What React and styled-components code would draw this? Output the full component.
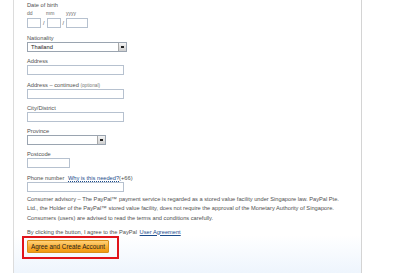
import React from 'react';
import styled, { createGlobalStyle } from 'styled-components';

const GlobalStyle = createGlobalStyle`
  html, body { margin: 0; padding: 0; background: #fff; }
  body { font-family: "Liberation Sans", Arial, sans-serif; }
`;

const Page = styled.div`
  width: 400px;
  height: 273px;
  overflow: hidden;
  background: #fff;
`;

const Panel = styled.div`
  margin-left: 13px;
  width: 349px;
  height: 273px;
  border-left: 1px solid #dcdcdc;
  border-right: 1px solid #d4d4d4;
  background: linear-gradient(to bottom, #fff 0, #fff 235px, #eef5fd 273px);
  box-sizing: border-box;
  padding: 1px 0 0 13px;
  color: #505050;
  font-size: 5.7px;
`;

const Group = styled.div`
  display: flex;
  flex-direction: column;
  align-items: flex-start;
  margin-bottom: ${p => p.gap ?? 5.3}px;
`;

const Label = styled.div`
  line-height: 8px;
  height: 8px;
  white-space: nowrap;
`;

const Small = styled.span`
  font-size: 4.7px;
  color: #777;
`;

const HelpLink = styled.a`
  color: #1a4b8c;
  text-decoration: none;
  border-bottom: 1px dotted #1a4b8c;
  margin-left: 2px;
`;

const DateRow = styled.div`
  display: flex;
  align-items: center;
  gap: 2px;
`;

const SubLabels = styled.div`
  display: flex;
  line-height: 8px;
  height: 9px;
  color: #666;
  font-size: 5px;
`;

const Sub = styled.span`
  width: ${p => p.w}px;
`;

const Input = styled.div`
  width: ${p => p.w}px;
  height: 10px;
  box-sizing: border-box;
  border: 1px solid #b6c1cf;
  background: #fff;
`;

const Slash = styled.span`
  font-size: 5.5px;
`;

const Select = styled.div`
  width: ${p => p.w}px;
  height: 10px;
  box-sizing: border-box;
  border: 1px solid #9aa4b0;
  background: #fff;
  display: flex;
  align-items: center;
  justify-content: space-between;
  padding-left: 3px;
  color: #222;
`;

const Arrow = styled.span`
  width: 7px;
  height: 8px;
  background: linear-gradient(#f4f4f4, #cfcfcf);
  border-left: 1px solid #a8a8a8;
  display: flex;
  align-items: center;
  justify-content: center;
  &::after {
    content: '';
    width: 3px;
    height: 1.5px;
    background: #222;
  }
`;

const Para = styled.p`
  margin: 3px 0 4px;
  width: 320px;
  line-height: 9.6px;
`;

const Agree = styled.p`
  margin: 0;
  line-height: 8px;
`;

const UserLink = styled.a`
  color: #1a4b8c;
  text-decoration: underline;
  margin-left: 1px;
`;

const Highlight = styled.div`
  display: inline-flex;
  margin-left: -5px;
  border: 2px solid #e1141b;
  padding: 2px 8px 4px 3px;
`;

const Button = styled.button`
  width: 82px;
  height: 13px;
  padding: 0;
  border: 1px solid #d98f18;
  border-radius: 1px;
  background: linear-gradient(#ffd27a, #f8aa2a 60%, #f39a14);
  font-family: "Liberation Sans", Arial, sans-serif;
  font-size: 6.3px;
  color: #1e1e1e;
`;

export default function App() {
  return (
    <Page>
      <GlobalStyle />
      <Panel>
        <Group gap={6}>
          <Label>Date of birth</Label>
          <SubLabels>
            <Sub w={19}>dd</Sub>
            <Sub w={20}>mm</Sub>
            <Sub w={20}>yyyy</Sub>
          </SubLabels>
          <DateRow>
            <Input w={14} />
            <Slash>/</Slash>
            <Input w={14} />
            <Slash>/</Slash>
            <Input w={22} />
          </DateRow>
        </Group>
        <Group>
          <Label>Nationality</Label>
          <Select w={100}>Thailand<Arrow /></Select>
        </Group>
        <Group>
          <Label>Address</Label>
          <Input w={97} />
        </Group>
        <Group>
          <Label>Address – continued <Small>(optional)</Small></Label>
          <Input w={97} />
        </Group>
        <Group>
          <Label>City/District</Label>
          <Input w={97} />
        </Group>
        <Group>
          <Label>Province</Label>
          <Select w={79}><span /><Arrow /></Select>
        </Group>
        <Group>
          <Label>Postcode</Label>
          <Input w={43} />
        </Group>
        <Group gap={0}>
          <Label>Phone number <HelpLink>Why is this needed?</HelpLink>(+66)</Label>
          <Input w={97} />
        </Group>
        <Para>
          Consumer advisory – The PayPal™ payment service is regarded as a stored value facility under Singapore law. PayPal Pte.
          Ltd., the Holder of the PayPal™ stored value facility, does not require the approval of the Monetary Authority of Singapore.
          Consumers (users) are advised to read the terms and conditions carefully.
        </Para>
        <Agree>By clicking the button, I agree to the PayPal <UserLink>User Agreement</UserLink></Agree>
        <Highlight>
          <Button>Agree and Create Account</Button>
        </Highlight>
      </Panel>
    </Page>
  );
}
